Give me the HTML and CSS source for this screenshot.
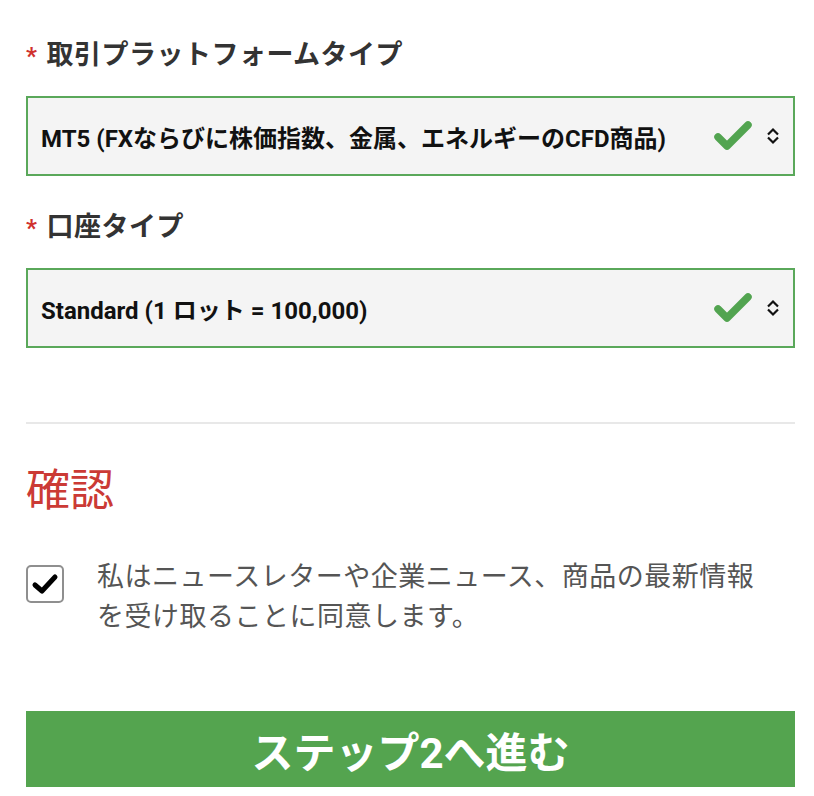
FILE: index.html
```html
<!DOCTYPE HTML>
<html lang="ja">
  <head>
  <title>口座開設</title>
  <meta charset="utf-8">
  <link rel="stylesheet" href="styles.css">
  </head>

  <body>

  <form class="form">
    <div class="field-label"><span class="req">*</span>取引プラットフォームタイプ</div>
    <div class="select">
      <span class="select-text">MT5 (FXならびに株価指数、金属、エネルギーのCFD商品)</span>
      <svg class="ok" width="40" height="34" viewBox="0 0 40 34"><polyline points="5,18 14,27 35,6" fill="none" stroke="#52a450" stroke-width="7.5" stroke-linecap="round" stroke-linejoin="round"/></svg>
      <svg class="arrows" width="16" height="20" viewBox="0 0 16 20"><polyline points="3,8.5 8,3.5 13,8.5" fill="none" stroke="#111" stroke-width="2.2"/><polyline points="3,11.5 8,16.5 13,11.5" fill="none" stroke="#111" stroke-width="2.2"/></svg>
    </div>

    <div class="field-label second"><span class="req">*</span>口座タイプ</div>
    <div class="select">
      <span class="select-text">Standard (1 ロット = 100,000)</span>
      <svg class="ok" width="40" height="34" viewBox="0 0 40 34"><polyline points="5,18 14,27 35,6" fill="none" stroke="#52a450" stroke-width="7.5" stroke-linecap="round" stroke-linejoin="round"/></svg>
      <svg class="arrows" width="16" height="20" viewBox="0 0 16 20"><polyline points="3,8.5 8,3.5 13,8.5" fill="none" stroke="#111" stroke-width="2.2"/><polyline points="3,11.5 8,16.5 13,11.5" fill="none" stroke="#111" stroke-width="2.2"/></svg>
    </div>

    <hr class="divider">

    <h2 class="section-title">確認</h2>

    <label class="agree">
      <span class="checkbox">
        <svg width="28" height="24" viewBox="0 0 28 24"><polyline points="4,13 11,19 24,5" fill="none" stroke="#000" stroke-width="5" stroke-linecap="round" stroke-linejoin="round"/></svg>
      </span>
      <span class="agree-text">私はニュースレターや企業ニュース、商品の最新情報を受け取ることに同意します。</span>
    </label>

    <button type="button" class="next">ステップ2へ進む</button>
  </form>

  </body>

</html>
```

FILE: styles.css
```css
html {
  height: 100%;
}
body {
  margin: 0;
  padding: 0;
  background: #ffffff;
  color: #333333;
  font-family: Roboto, "Noto Sans CJK JP", sans-serif;
}

.form {
  padding: 37px 19px 0 26px;
}

.field-label {
  font-size: 27px;
  font-weight: bold;
  line-height: 36px;
  height: 36px;
  letter-spacing: 0.5px;
  color: #333333;
  margin-bottom: 23px;
}
.field-label.second {
  margin-top: 33px;
}

.req {
  display: inline-block;
  line-height: 1;
  color: #d0312d;
  margin-right: 9px;
  font-size: 24px;
}

.select {
  box-sizing: border-box;
  height: 80px;
  display: flex;
  align-items: center;
  background-color: #f4f4f4;
  border: 2px solid #5aa85a;
  padding: 0 12px 0 13px;
}

.select-text {
  flex: 1;
  font-size: 24px;
  font-weight: bold;
  color: #111111;
}

.ok {
  margin-right: 12px;
}

.divider {
  border: 0;
  border-top: 2px solid #e8e8e8;
  margin: 74px 0 0 0;
}

.section-title {
  margin: 39px 0 0 0;
  font-size: 44px;
  line-height: 56px;
  font-weight: normal;
  color: #cb3a35;
}

.agree {
  display: flex;
  align-items: flex-start;
  margin-top: 38px;
}

.checkbox {
  box-sizing: border-box;
  flex: none;
  width: 38px;
  height: 38px;
  margin-top: 8px;
  margin-right: 33px;
  border: 2px solid #8f8f8f;
  border-radius: 5px;
  display: flex;
  align-items: center;
  justify-content: center;
}

.agree-text {
  font-size: 27px;
  line-height: 40px;
  letter-spacing: 0.5px;
  padding-right: 24px;
  color: #555555;
}

.next {
  display: block;
  width: 100%;
  height: 76px;
  margin-top: 74px;
  border: 0;
  background-color: #54a44f;
  color: #ffffff;
  font-family: Roboto, "Noto Sans CJK JP", sans-serif;
  font-size: 42px;
  font-weight: bold;
}
```
